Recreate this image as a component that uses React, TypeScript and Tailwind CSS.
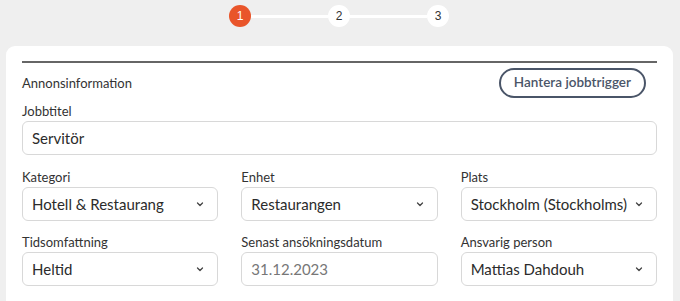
import React from "react";

const font = { fontFamily: 'Lato, "Noto Sans", sans-serif' };

function Chevron() {
  return (
    <svg width="10" height="10" viewBox="0 0 10 10" className="shrink-0">
      <path d="M2.5 4 L5 6.5 L7.5 4" fill="none" stroke="#444" strokeWidth="1.3" strokeLinecap="round" strokeLinejoin="round" />
    </svg>
  );
}

function Field({ label, value, select, muted }: { label: string; value: string; select?: boolean; muted?: boolean }) {
  return (
    <div className="flex flex-col gap-[1px]">
      <div className="text-[13px] leading-[18px] text-[#333] whitespace-nowrap">{label}</div>
      <div className="h-[34px] rounded-[6px] border border-[#d8d8d8] bg-white flex items-center justify-between pl-[9px] pr-[12px]">
        <span className={"text-[15px] leading-[20px] whitespace-nowrap " + (muted ? "text-[#777]" : "text-[#2b2b2b]")}>{value}</span>
        {select ? <Chevron /> : null}
      </div>
    </div>
  );
}

export default function App() {
  return (
    <div className="w-[680px] h-[301px] bg-[#efefef] overflow-hidden" style={font}>
      <div className="h-[46px] flex justify-center pt-[5px]">
        <div className="flex items-start ml-[-2px]" style={{ fontFamily: '"Liberation Sans", Arial, sans-serif' }}>
          {["1", "2", "3"].map((n, i) => (
            <React.Fragment key={n}>
              {i > 0 && <div className="w-[77px] h-[3px] bg-white mt-[10px]" />}
              <div
                className={
                  "w-[22px] h-[22px] rounded-full flex items-center justify-center text-[12px] " +
                  (i === 0 ? "bg-[#e9552a] text-white" : "bg-white text-[#333]")
                }
              >
                {n}
              </div>
            </React.Fragment>
          ))}
        </div>
      </div>
      <div className="ml-[6px] mr-[7px] bg-white rounded-[9px] px-[16px] pt-[15px] h-[270px]">
        <div className="h-[2px] bg-[#666]" />
        <div className="flex items-center justify-between mt-[5px]">
          <div className="text-[13px] leading-[18px] text-[#333]">Annonsinformation</div>
          <button className="mr-[11px] h-[30px] px-[13px] rounded-full border-2 border-[#4a5568] text-[#4a5568] text-[13.5px] font-semibold leading-none">
            Hantera jobbtrigger
          </button>
        </div>
        <div className="mt-[4px]">
          <Field label="Jobbtitel" value="Servitör" />
        </div>
        <div className="grid grid-cols-3 gap-x-[23px] gap-y-[12px] mt-[13px]">
          <Field label="Kategori" value="Hotell & Restaurang" select />
          <Field label="Enhet" value="Restaurangen" select />
          <Field label="Plats" value="Stockholm (Stockholms)" select />
          <Field label="Tidsomfattning" value="Heltid" select />
          <Field label="Senast ansökningsdatum" value="31.12.2023" muted />
          <Field label="Ansvarig person" value="Mattias Dahdouh" select />
        </div>
      </div>
    </div>
  );
}
